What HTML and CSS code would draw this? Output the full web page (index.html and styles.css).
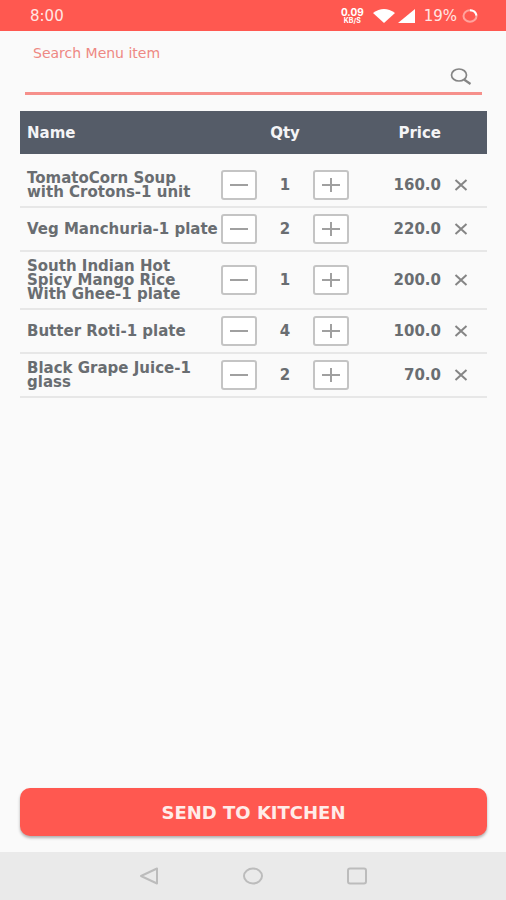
FILE: index.html
```html
<!DOCTYPE html>
<html lang="en">
<head>
<meta charset="utf-8">
<meta name="viewport" content="width=device-width, initial-scale=1">
<title>Order</title>
<link rel="stylesheet" href="styles.css">
</head>
<body>
<header class="status">
  <span class="clock">8:00</span>
  <span class="speed"><span>0.09</span><span class="unit">KB/S</span></span>
  <svg class="wifi" width="22" height="14" viewBox="0 0 22 14"><path d="M0 4Q11-4 22 4L11 14Z" fill="#fff"/></svg>
  <svg class="signal" width="17" height="14" viewBox="0 0 17 14"><path d="M17 0V14H0Z" fill="#fff"/></svg>
  <span class="battery">19%</span>
  <svg class="ring" width="16" height="14" viewBox="0 0 16 14" fill="none" stroke-width="2"><ellipse cx="8" cy="7" rx="6.5" ry="5.8" stroke="#ffa39d"/><path d="M8 1.2Q13.500 1.200 14.500 6.500" stroke="#fff"/></svg>
</header>
<main class="content">
  <form class="search">
    <label for="search">Search Menu item</label>
    <div class="field">
      <input id="search" type="text">
      <button type="button" aria-label="Search"><svg width="22" height="18" viewBox="0 0 22 18" fill="none" stroke="#858585"><ellipse cx="9" cy="7" rx="7.500" ry="6" stroke-width="1.700"/><path d="M14 11.500L20.500 16" stroke-width="2.200"/></svg></button>
    </div>
  </form>
  <table class="order">
    <colgroup><col><col class="step"><col class="count"><col class="step"><col class="cost"><col class="drop"></colgroup>
    <thead>
      <tr><th class="name">Name</th><th colspan="3">Qty</th><th class="price">Price</th><th></th></tr>
    </thead>
    <tbody>
      <tr>
        <td class="name">TomatoCorn Soup<br>with Crotons-1 unit</td>
        <td><button class="box" type="button" aria-label="Decrease"><svg width="18" height="16" viewBox="0 0 18 16"><path d="M0 8H18"/></svg></button></td>
        <td>1</td>
        <td><button class="box" type="button" aria-label="Increase"><svg width="18" height="16" viewBox="0 0 18 16"><path d="M0 8H18M9 1V15"/></svg></button></td>
        <td class="price">160.0</td>
        <td><button class="remove" type="button" aria-label="Remove"><svg width="14" height="12" viewBox="0 0 14 12"><path d="M1.500 1L12.500 11M12.500 1L1.500 11"/></svg></button></td>
      </tr>
      <tr>
        <td class="name">Veg Manchuria-1 plate</td>
        <td><button class="box" type="button" aria-label="Decrease"><svg width="18" height="16" viewBox="0 0 18 16"><path d="M0 8H18"/></svg></button></td>
        <td>2</td>
        <td><button class="box" type="button" aria-label="Increase"><svg width="18" height="16" viewBox="0 0 18 16"><path d="M0 8H18M9 1V15"/></svg></button></td>
        <td class="price">220.0</td>
        <td><button class="remove" type="button" aria-label="Remove"><svg width="14" height="12" viewBox="0 0 14 12"><path d="M1.500 1L12.500 11M12.500 1L1.500 11"/></svg></button></td>
      </tr>
      <tr>
        <td class="name">South Indian Hot<br>Spicy Mango Rice<br>With Ghee-1 plate</td>
        <td><button class="box" type="button" aria-label="Decrease"><svg width="18" height="16" viewBox="0 0 18 16"><path d="M0 8H18"/></svg></button></td>
        <td>1</td>
        <td><button class="box" type="button" aria-label="Increase"><svg width="18" height="16" viewBox="0 0 18 16"><path d="M0 8H18M9 1V15"/></svg></button></td>
        <td class="price">200.0</td>
        <td><button class="remove" type="button" aria-label="Remove"><svg width="14" height="12" viewBox="0 0 14 12"><path d="M1.500 1L12.500 11M12.500 1L1.500 11"/></svg></button></td>
      </tr>
      <tr>
        <td class="name">Butter Roti-1 plate</td>
        <td><button class="box" type="button" aria-label="Decrease"><svg width="18" height="16" viewBox="0 0 18 16"><path d="M0 8H18"/></svg></button></td>
        <td>4</td>
        <td><button class="box" type="button" aria-label="Increase"><svg width="18" height="16" viewBox="0 0 18 16"><path d="M0 8H18M9 1V15"/></svg></button></td>
        <td class="price">100.0</td>
        <td><button class="remove" type="button" aria-label="Remove"><svg width="14" height="12" viewBox="0 0 14 12"><path d="M1.500 1L12.500 11M12.500 1L1.500 11"/></svg></button></td>
      </tr>
      <tr>
        <td class="name">Black Grape Juice-1<br>glass</td>
        <td><button class="box" type="button" aria-label="Decrease"><svg width="18" height="16" viewBox="0 0 18 16"><path d="M0 8H18"/></svg></button></td>
        <td>2</td>
        <td><button class="box" type="button" aria-label="Increase"><svg width="18" height="16" viewBox="0 0 18 16"><path d="M0 8H18M9 1V15"/></svg></button></td>
        <td class="price">70.0</td>
        <td><button class="remove" type="button" aria-label="Remove"><svg width="14" height="12" viewBox="0 0 14 12"><path d="M1.500 1L12.500 11M12.500 1L1.500 11"/></svg></button></td>
      </tr>
    </tbody>
  </table>
  <button class="send" type="button">SEND TO KITCHEN</button>
</main>
<nav class="system">
  <button type="button" aria-label="Back"><svg width="20" height="18" viewBox="0 0 20 18"><path d="M18 1.500V16.500L2 9Z"/></svg></button>
  <button type="button" aria-label="Home"><svg width="20" height="18" viewBox="0 0 20 18"><ellipse cx="10" cy="9" rx="9" ry="7.500"/></svg></button>
  <button type="button" aria-label="Recent apps"><svg width="20" height="18" viewBox="0 0 20 18"><rect x="1" y="1.500" width="18" height="15" rx="2"/></svg></button>
</nav>
</body>
</html>
```
FILE: styles.css
```css
* {
  box-sizing: border-box;
}

body {
  margin: 0;
  min-height: 100vh;
  display: flex;
  flex-direction: column;
  background: #fafafa;
  color: #696d71;
  font-family: "DejaVu Sans", Inter, sans-serif;
  font-size: 15px;
}

button {
  display: flex;
  align-items: center;
  justify-content: center;
  padding: 0;
  border: 0;
  background: none;
  font: inherit;
}

svg {
  display: block;
}

.status {
  display: flex;
  align-items: center;
  height: 31px;
  padding: 0 28px 0 30px;
  background: #ff5850;
  color: #ffe6e4;
}

.clock {
  margin-right: auto;
}

.speed {
  display: flex;
  flex-direction: column;
  align-items: center;
  color: #fff;
  font-family: Inter, sans-serif;
  font-size: 10px;
  font-weight: 700;
  line-height: 10px;
}

.unit {
  font-size: 7px;
  line-height: 8px;
}

.wifi {
  margin-left: 9px;
}

.signal {
  margin-left: 3px;
}

.battery {
  margin: 0 5px 0 9px;
}

.content {
  flex: 1;
  display: flex;
  flex-direction: column;
  padding: 14px 19px 16px 20px;
}

.search {
  margin: 0 5px 16px;
  border-bottom: 3px solid #f6908b;
}

.search label {
  display: block;
  padding-left: 8px;
  color: #ee8883;
  font-size: 14px;
  line-height: 16px;
}

.field {
  display: flex;
  align-items: center;
  height: 31px;
  padding-right: 10px;
}

.field input {
  flex: 1;
  min-width: 0;
  padding: 0 8px;
  border: 0;
  outline: 0;
  background: none;
  font: inherit;
}

.order {
  width: 100%;
  table-layout: fixed;
  border-spacing: 0;
  font-weight: 700;
  line-height: 14px;
  text-align: center;
}

.step {
  width: 36px;
}

.count {
  width: 56px;
}

.cost {
  width: 92px;
}

.drop {
  width: 46px;
}

.order th {
  height: 43px;
  padding: 0;
  background: #555c68;
  color: #f4f4f6;
}

.order tbody::before {
  content: "";
  display: block;
  height: 10px;
}

.order td {
  height: 44px;
  padding: 0;
  border-bottom: 2px solid #e7e7e7;
}

.order .name {
  padding-left: 7px;
  text-align: left;
  white-space: nowrap;
}

.order td.name {
  padding-top: 7px;
  padding-bottom: 7px;
}

.order .price {
  text-align: right;
}

.box {
  width: 36px;
  height: 30px;
  border: 2px solid #c4c4c4;
  border-radius: 3px;
  background: #fff;
}

.box path {
  stroke: #a0a0a0;
  stroke-width: 2;
}

.remove {
  width: 40px;
  height: 30px;
}

.remove path {
  stroke: #858585;
  stroke-width: 2;
}

.send {
  height: 48px;
  margin-top: auto;
  border-radius: 10px;
  background: #ff5850;
  box-shadow: 0 2px 3px #0000004d;
  color: #ffece9;
  font-size: 18px;
  font-weight: 700;
}

.system {
  display: flex;
  align-items: center;
  justify-content: center;
  gap: 84px;
  height: 48px;
  background: #eaeaea;
}

.system svg {
  fill: none;
  stroke: #bcbcbc;
  stroke-width: 2;
  stroke-linejoin: round;
}
```
